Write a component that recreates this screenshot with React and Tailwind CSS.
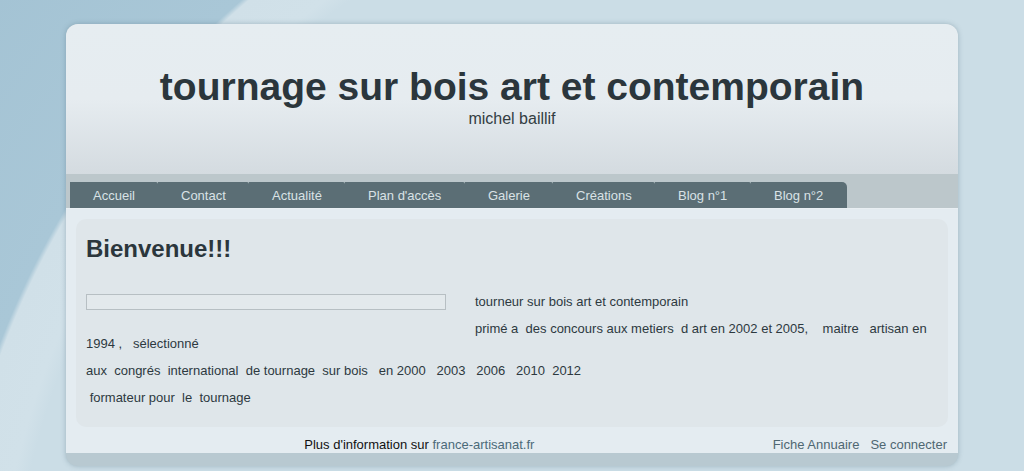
const tabs = [
  ['Accueil', 'w-[88px]'],
  ['Contact', 'w-[91px]'],
  ['Actualité', 'w-[96px]'],
  ["Plan d'accès", 'w-[120px]'],
  ['Galerie', 'w-[88px]'],
  ['Créations', 'w-[102px]'],
  ['Blog n°1', 'w-[96px]'],
  ['Blog n°2', 'w-[96px]'],
];

function NavTabs() {
  return (
    <nav className="flex h-[34px] items-end bg-[#bcc7cb] px-[4px]">
      {tabs.map(([t, w], i) => (
        <a
          key={t}
          href="#"
          className={
            'flex h-[26px] items-center bg-[#5b6e75] pl-[23px] pt-[1px] text-[13px] text-[#d9e2e6] ' +
            w +
            (i === tabs.length - 1 ? ' rounded-tr-[5px]' : ' rounded-tr-[2px]')
          }
        >
          {t}
        </a>
      ))}
    </nav>
  );
}

function Welcome() {
  return (
    <section className="rounded-[10px] bg-[#dfe6ea] px-[10px] pb-[22px] pt-[16px]">
      <h2 className="text-[24px] font-bold leading-[28px] text-[#2b363c]">Bienvenue!!!</h2>
      <div className="mt-[31px] text-[13px] leading-[15px] text-[#2d393f]">
        <div className="float-left mb-[22px] mr-[29px] h-[16px] w-[360px] border border-[#b7bfc3] bg-[#e3e9ec]" />
        <p className="whitespace-pre-wrap">tourneur sur bois art et contemporain</p>
        <p className="mt-[12px] whitespace-pre-wrap">
          {'primé a  des concours aux metiers  d art en 2002 et 2005,    maitre   artisan en 1994 ,   sélectionné'}
        </p>
        <p className="mt-[12px] whitespace-pre-wrap">
          {'aux  congrés  international  de tournage  sur bois   en 2000   2003   2006   2010  2012'}
        </p>
        <p className="mt-[12px] whitespace-pre-wrap">{' formateur pour  le  tournage'}</p>
      </div>
    </section>
  );
}

export default function App() {
  return (
    <div
      className="min-h-[471px] bg-[#cbdde6] bg-[radial-gradient(circle_at_800px_650px,#cbdde6_0px,#cbdde6_790px,#d1e1e9_805px,#d0e0e8_852px,#a9c7d7_857px,#a2c2d3_1100px)] pt-[24px] font-['Liberation_Sans',Arial,sans-serif]"
    >
      <div className="mx-auto w-[892px] rounded-[12px] bg-[#b8c9d1] pb-[13px] shadow-[0_0_5px_rgba(70,100,115,0.35)]">
        <header className="h-[150px] rounded-t-[12px] bg-[linear-gradient(to_bottom,#e6edf1_0%,#e6ecf0_50%,#d4dbe0_100%)] pt-[40px] text-center text-[#2b363c]">
          <h1 className="text-[39px] font-bold leading-[45px]">tournage sur bois art et contemporain</h1>
          <p className="text-[16px] leading-[20px] text-[#333d42]">michel baillif</p>
        </header>
        <NavTabs />
        <main className="border-t border-[#e9eff3] bg-[#e4ecf1] px-[10px] pt-[10px]">
          <Welcome />
          <footer className="flex pb-[1px] pt-[10px] text-[13px] leading-[15px]">
            <div className="flex-1 pr-[10px] text-center">
              <span className="text-[#111]">Plus d'information sur </span>
              <a href="#" className="text-[#4b6a79]">france-artisanat.fr</a>
            </div>
            <div className="flex gap-[11px] pr-[1px] text-[#4f6772]">
              <a href="#">Fiche Annuaire</a>
              <a href="#">Se connecter</a>
            </div>
          </footer>
        </main>
      </div>
    </div>
  );
}
